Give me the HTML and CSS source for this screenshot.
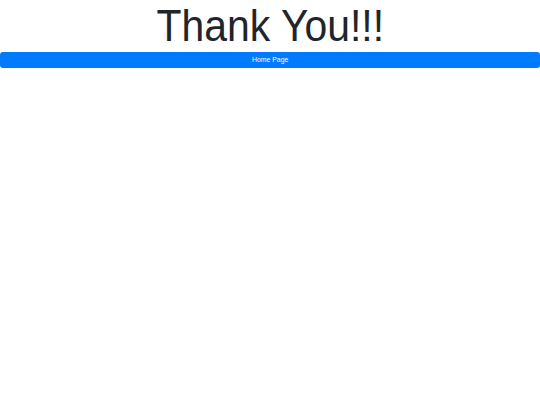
FILE: index.html
```html
<!DOCTYPE html>
<html>
<head>
<meta charset="utf-8">
<link rel="stylesheet" href="styles.css">
</head>
<body>
<h1 class="title"><span class="title-text">Thank You!!!</span></h1>
<a class="btn" href="#"><span class="btn-text">Home Page</span></a>
</body>
</html>
```
FILE: styles.css
```css
html, body { margin: 0; padding: 0; background: #fff; }
body { font-family: "Liberation Sans", Arial, sans-serif; color: #212529; }
.title {
  margin: 0;
  height: 52px;
  font-size: 44px;
  font-weight: 400;
  line-height: 52px;
  text-align: center;
}
.title-text {
  display: inline-block;
  transform: scaleX(0.93);
}
.btn {
  display: block;
  height: 16px;
  line-height: 16px;
  background: #007bff;
  color: #fff;
  font-size: 8px;
  text-align: center;
  text-decoration: none;
  border-radius: 3px;
}
.btn-text {
  display: inline-block;
  transform: scaleX(0.86);
}
```
